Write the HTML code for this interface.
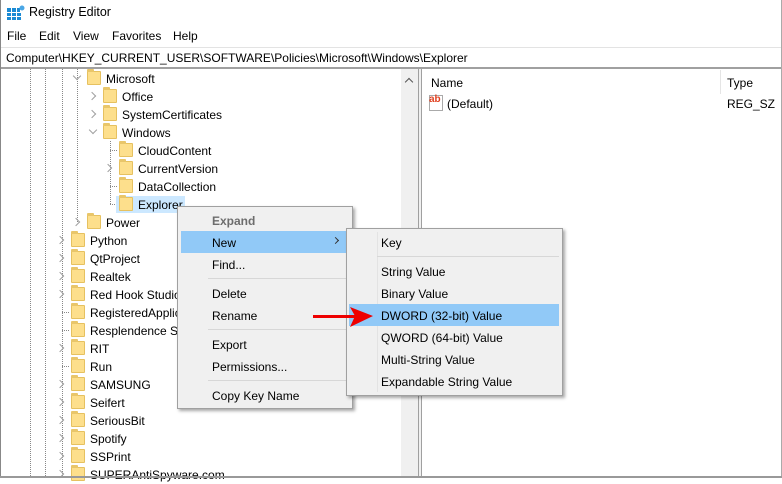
<!DOCTYPE html>
<html><head><meta charset="utf-8"><style>
*{margin:0;padding:0;box-sizing:border-box}
body{width:782px;height:478px;overflow:hidden;background:#fff;font-family:"Liberation Sans",sans-serif;font-size:12px;color:#000;position:relative}
.a{position:absolute;white-space:nowrap}
.t{line-height:18px;height:18px;margin-top:1px}
.f{position:absolute;width:14px;height:14px;background:#fddf8c;border:1px solid #e6c160;border-radius:1px}
.f:before{content:"";position:absolute;left:-1px;top:-3px;width:7px;height:3px;background:#e9c66a;border-radius:1px 1px 0 0}
.dv{position:absolute;border-left:1px dotted #888;width:0}
.dh{position:absolute;border-top:1px dotted #888;height:0}
.cv{position:absolute;width:6px;height:6px;border-right:1.5px solid #a0a0a0;border-bottom:1.5px solid #a0a0a0}
.menu{position:absolute;background:#f0f0f0;border:1px solid #a0a0a0;box-shadow:2px 2px 3px rgba(0,0,0,.35)}
.sep{position:absolute;height:1px;background:#d7d7d7}
.hl{position:absolute;background:#91c9f7}
</style></head><body>
<div class="a" style="left:0;top:0;width:1px;height:478px;background:#888"></div>
<div class="a" style="right:0;top:0;width:1px;height:478px;background:#aaa"></div>
<svg class="a" style="left:7px;top:5px" width="18" height="16"><g fill="#1a8ad4"><rect x="0" y="3" width="4" height="4"/><rect x="5" y="3" width="4" height="4"/><rect x="10" y="3" width="3" height="4"/><rect x="0" y="8" width="4" height="3"/><rect x="5" y="8" width="4" height="3"/><rect x="10" y="8" width="4" height="3"/><rect x="0" y="12" width="4" height="3"/><rect x="5" y="12" width="4" height="3"/><rect x="10" y="12" width="4" height="3"/></g><circle cx="15" cy="3" r="2.5" fill="#4aa7e6"/></svg>
<div class="a" style="left:29px;top:5px;font-size:12.5px">Registry Editor</div>
<div class="a" style="left:7px;top:29px">File</div>
<div class="a" style="left:39px;top:29px">Edit</div>
<div class="a" style="left:73px;top:29px">View</div>
<div class="a" style="left:112px;top:29px">Favorites</div>
<div class="a" style="left:173px;top:29px">Help</div>
<div class="a" style="left:1px;top:47px;width:780px;height:22px;border-top:1px solid #e3e3e3;border-bottom:2px solid #a0a0a0"></div>
<div class="a" style="left:6px;top:51px">Computer\HKEY_CURRENT_USER\SOFTWARE\Policies\Microsoft\Windows\Explorer</div>
<div class="a" style="left:401px;top:69px;width:17px;height:407px;background:#f0f0f0"></div>
<div class="a" style="top:79px;width:6px;height:6px;border-left:1.5px solid #555;border-top:1.5px solid #555;transform:rotate(45deg);left:406px"></div>
<div class="a" style="left:418px;top:69px;width:4px;height:407px;background:#f0f0f0;border-left:1px solid #a0a0a0;border-right:1px solid #a0a0a0"></div>
<div class="a" style="left:431px;top:76px">Name</div>
<div class="a" style="left:720px;top:70px;width:1px;height:24px;background:#e5e5e5"></div>
<div class="a" style="left:727px;top:76px">Type</div>
<div class="a" style="left:429px;top:95px;width:14px;height:16px;border:1px solid #aaa;background:#fff"></div>
<div class="a" style="left:429px;top:94px;font-size:10px;font-weight:bold;color:#e04020">ab</div>
<div class="a" style="left:447px;top:97px">(Default)</div>
<div class="a" style="left:727px;top:97px">REG_SZ</div>
<div class="dv" style="left:30px;top:69px;height:407px"></div>
<div class="dv" style="left:45px;top:69px;height:407px"></div>
<div class="dv" style="left:62px;top:69px;height:407px"></div>
<div class="dv" style="left:77px;top:69px;height:153px"></div>
<div class="dv" style="left:110px;top:141px;height:63px"></div>
<div class="dh" style="left:110px;top:150px;width:7px"></div>
<div class="dh" style="left:110px;top:186px;width:7px"></div>
<div class="dh" style="left:110px;top:204px;width:7px"></div>
<div class="dh" style="left:62px;top:312px;width:7px"></div>
<div class="dh" style="left:62px;top:330px;width:7px"></div>
<div class="dh" style="left:62px;top:366px;width:7px"></div>
<div class="a" style="left:116px;top:196px;width:69px;height:17px;background:#cce8ff"></div>
<div class="cv" style="left:74px;top:73px;transform:rotate(45deg)"></div>
<div class="cv" style="left:89px;top:93px;transform:rotate(-45deg)"></div>
<div class="cv" style="left:89px;top:111px;transform:rotate(-45deg)"></div>
<div class="cv" style="left:90px;top:127px;transform:rotate(45deg)"></div>
<div class="cv" style="left:105px;top:165px;transform:rotate(-45deg)"></div>
<div class="cv" style="left:73px;top:219px;transform:rotate(-45deg)"></div>
<div class="cv" style="left:57px;top:237px;transform:rotate(-45deg)"></div>
<div class="cv" style="left:57px;top:255px;transform:rotate(-45deg)"></div>
<div class="cv" style="left:57px;top:273px;transform:rotate(-45deg)"></div>
<div class="cv" style="left:57px;top:291px;transform:rotate(-45deg)"></div>
<div class="cv" style="left:57px;top:345px;transform:rotate(-45deg)"></div>
<div class="cv" style="left:57px;top:381px;transform:rotate(-45deg)"></div>
<div class="cv" style="left:57px;top:399px;transform:rotate(-45deg)"></div>
<div class="cv" style="left:57px;top:417px;transform:rotate(-45deg)"></div>
<div class="cv" style="left:57px;top:435px;transform:rotate(-45deg)"></div>
<div class="cv" style="left:57px;top:453px;transform:rotate(-45deg)"></div>
<div class="cv" style="left:57px;top:471px;transform:rotate(-45deg)"></div>
<div class="f" style="left:87px;top:71px"></div><div class="a t" style="left:106px;top:69px">Microsoft</div>
<div class="f" style="left:103px;top:89px"></div><div class="a t" style="left:122px;top:87px">Office</div>
<div class="f" style="left:103px;top:107px"></div><div class="a t" style="left:122px;top:105px">SystemCertificates</div>
<div class="f" style="left:103px;top:125px"></div><div class="a t" style="left:122px;top:123px">Windows</div>
<div class="f" style="left:119px;top:143px"></div><div class="a t" style="left:138px;top:141px">CloudContent</div>
<div class="f" style="left:119px;top:161px"></div><div class="a t" style="left:138px;top:159px">CurrentVersion</div>
<div class="f" style="left:119px;top:179px"></div><div class="a t" style="left:138px;top:177px">DataCollection</div>
<div class="f" style="left:119px;top:197px"></div><div class="a t" style="left:138px;top:195px">Explorer</div>
<div class="f" style="left:87px;top:215px"></div><div class="a t" style="left:106px;top:213px">Power</div>
<div class="f" style="left:71px;top:233px"></div><div class="a t" style="left:90px;top:231px">Python</div>
<div class="f" style="left:71px;top:251px"></div><div class="a t" style="left:90px;top:249px">QtProject</div>
<div class="f" style="left:71px;top:269px"></div><div class="a t" style="left:90px;top:267px">Realtek</div>
<div class="f" style="left:71px;top:287px"></div><div class="a t" style="left:90px;top:285px">Red Hook Studios</div>
<div class="f" style="left:71px;top:305px"></div><div class="a t" style="left:90px;top:303px">RegisteredApplications</div>
<div class="f" style="left:71px;top:323px"></div><div class="a t" style="left:90px;top:321px">Resplendence Software</div>
<div class="f" style="left:71px;top:341px"></div><div class="a t" style="left:90px;top:339px">RIT</div>
<div class="f" style="left:71px;top:359px"></div><div class="a t" style="left:90px;top:357px">Run</div>
<div class="f" style="left:71px;top:377px"></div><div class="a t" style="left:90px;top:375px">SAMSUNG</div>
<div class="f" style="left:71px;top:395px"></div><div class="a t" style="left:90px;top:393px">Seifert</div>
<div class="f" style="left:71px;top:413px"></div><div class="a t" style="left:90px;top:411px">SeriousBit</div>
<div class="f" style="left:71px;top:431px"></div><div class="a t" style="left:90px;top:429px">Spotify</div>
<div class="f" style="left:71px;top:449px"></div><div class="a t" style="left:90px;top:447px">SSPrint</div>
<div class="f" style="left:71px;top:467px"></div><div class="a t" style="left:90px;top:465px">SUPERAntiSpyware.com</div>
<div class="a" style="left:0;top:476px;width:782px;height:2px;background:#999"></div>
<div class="menu" style="left:177px;top:206px;width:176px;height:203px">
<div class="hl" style="left:3px;top:24px;width:166px;height:22px"></div>
<div class="a t" style="left:34px;top:4px;color:#6d6d6d;font-weight:bold">Expand</div>
<div class="a t" style="left:34px;top:26px">New</div>
<div class="a" style="left:155px;top:31px;width:5px;height:5px;border-right:1px solid #333;border-top:1px solid #333;transform:rotate(45deg)"></div>
<div class="a t" style="left:34px;top:48px">Find...</div>
<div class="sep" style="left:30px;top:71px;width:140px"></div>
<div class="a t" style="left:34px;top:77px">Delete</div>
<div class="a t" style="left:34px;top:99px">Rename</div>
<div class="sep" style="left:30px;top:122px;width:140px"></div>
<div class="a t" style="left:34px;top:128px">Export</div>
<div class="a t" style="left:34px;top:150px">Permissions...</div>
<div class="sep" style="left:30px;top:173px;width:140px"></div>
<div class="a t" style="left:34px;top:179px">Copy Key Name</div>
</div>
<div class="menu" style="left:346px;top:228px;width:217px;height:168px">
<div class="a" style="left:30px;top:3px;width:1px;height:160px;background:#e3e3e3"></div>
<div class="hl" style="left:2px;top:75px;width:210px;height:22px"></div>
<div class="a t" style="left:34px;top:4px">Key</div>
<div class="sep" style="left:30px;top:27px;width:182px"></div>
<div class="a t" style="left:34px;top:33px">String Value</div>
<div class="a t" style="left:34px;top:55px">Binary Value</div>
<div class="a t" style="left:34px;top:77px">DWORD (32-bit) Value</div>
<div class="a t" style="left:34px;top:99px">QWORD (64-bit) Value</div>
<div class="a t" style="left:34px;top:121px">Multi-String Value</div>
<div class="a t" style="left:34px;top:143px">Expandable String Value</div>
</div>
<svg class="a" style="left:310px;top:305px" width="66" height="24"><rect x="3" y="10" width="42" height="3" fill="#e00"/><polygon points="40,2 63,11 40,22 45,11" fill="#e00"/></svg>
</body></html>
